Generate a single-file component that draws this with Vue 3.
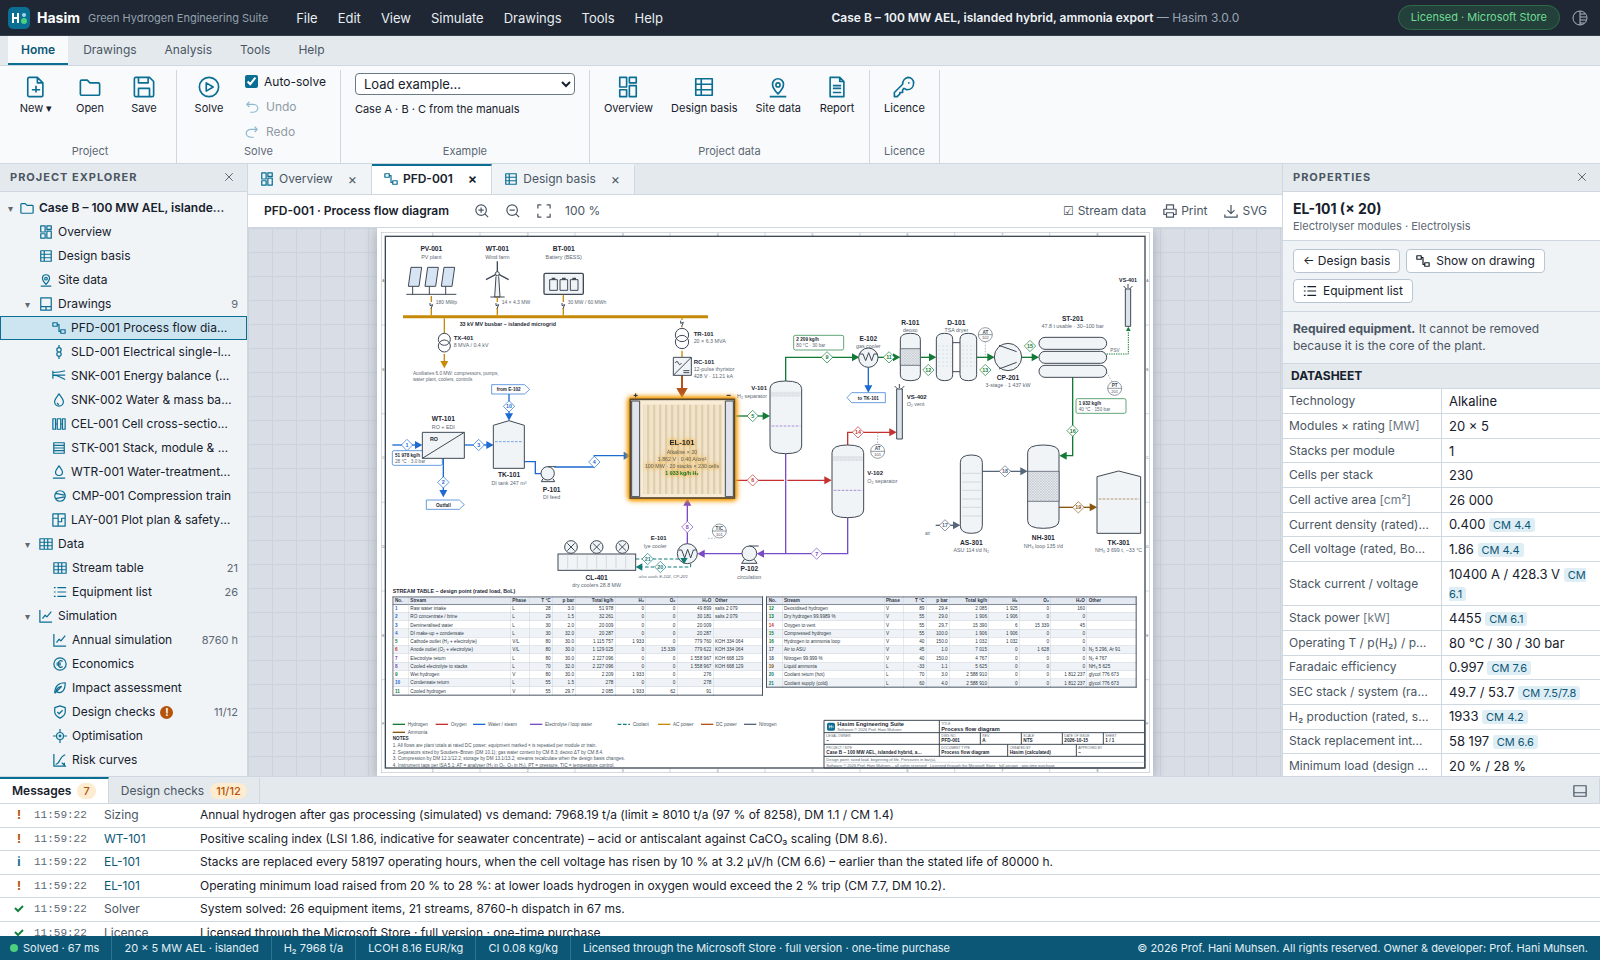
<script setup>
import { ref } from 'vue'

const icons = {
  overview: 'M2 1h5v7H2zM9 1h5v4H9zM2 10h5v5H2zM9 7h5v8H9z',
  basis: 'M2 2h12v12H2zM2 6h12M2 10h12M6 2v12',
  site: 'M8 13C5 10 4 8 4 6a4 4 0 0 1 8 0c0 2-1 4-4 7zM8 5a1 1 0 1 0 0 3 1 1 0 0 0 0-3zM2 15h12',
  drawings: 'M2 1h12v14H2zM2 11h12M8 11v4',
  pfd: 'M1 2h5v4H1zM10 10h5v4h-5zM6 4h2v8h2',
  sld: 'M8 0v3M8 13v3M8 3a2 2 0 1 0 0 5 2 2 0 0 0 0-5zM8 8a2 2 0 1 0 0 5 2 2 0 0 0 0-5z',
  energy: 'M1 2v9M1 4c6 0 8 0 14-2M1 7c7 0 8 0 14 0M1 7c7 0 9 3 14 5',
  drop: 'M8 1C6 4 3 7 3 10a5 5 0 0 0 10 0c0-3-3-6-5-9zM6 11c0 1 1 2 2 2',
  cell: 'M1 2h3v12H1zM6 2h4v12H6zM12 2h3v12h-3zM4 8h2M10 8h2',
  stack: 'M2 2h12v3H2zM2 5h12v3H2zM2 8h12v3H2zM2 11h12v3H2z',
  water: 'M8 1C6 4 4 6 4 8a4 4 0 0 0 8 0c0-2-2-4-4-7zM1 15h14',
  compressor: 'M8 2a6 6 0 1 0 0 12A6 6 0 0 0 8 2zM3 5l10 2M3 11l10-2',
  layout: 'M1 1h14v14H1zM1 6h6M7 1v14M7 10h4V6h4',
  table: 'M1 2h14v12H1zM1 6h14M1 10h14M6 2v12M10 2v12',
  list: 'M5 3h10M5 8h10M5 13h10M1 3h2M1 8h2M1 13h2',
  chart: 'M1 1v14h14M4 11l3-4 2 2 5-6',
  euro: 'M8 1a7 7 0 1 0 0 14A7 7 0 0 0 8 1zM11 5C8 3 6 5 6 8s2 5 5 3M4 7h5M4 9h5',
  leaf: 'M2 14c0-8 4-12 12-12 0 9-4 12-8 11-4-1-2-6 4-7M2 14l8-8',
  shield: 'M8 1l6 2v5c0 3-2 5-6 7-4-2-6-4-6-7V3zM5 8l2 2 4-4',
  target: 'M8 4a4 4 0 1 0 0 8 4 4 0 0 0 0-8zM8 7a1 1 0 1 0 0 2 1 1 0 0 0 0-2zM8 0v4M8 12v4M0 8h4M12 8h4',
  risk: 'M1 1v14h14M3 13c5 0 4-9 11-11M10 11l3 3M13 11v4h-3',
  folder: 'M1 4a1 1 0 0 1 1-1h4l2 2h6a1 1 0 0 1 1 1v7a1 1 0 0 1-1 1H2a1 1 0 0 1-1-1z',
  newfile: 'M3 1h6l4 4v9a1 1 0 0 1-1 1H3a1 1 0 0 1-1-1V2a1 1 0 0 1 1-1zM9 1v4h4M8 7v5M5 10h6',
  save: 'M2 1h10l3 3v10a1 1 0 0 1-1 1H2a1 1 0 0 1-1-1V2a1 1 0 0 1 1-1zM4 1v4h7V1M4 15V9h8v6',
  solve: 'M8 1a7 7 0 1 0 0 14A7 7 0 0 0 8 1zM6 5l5 3-5 3z',
  report: 'M3 1h7l3 3v11H3zM10 1v3h3M5 7h6M5 9h6M5 12h6',
  key: 'M11 1a4 4 0 0 1 4 4c0 3-2 5-5 5L8 9l-1 1v2H5v1l-2 2H1v-3l6-6a5 5 0 0 1 4-5zM11 5h1',
  undo: 'M5 2L2 5l3 3M2 5h7a5 4 0 0 1 0 9H6',
  redo: 'M11 2l3 3-3 3M14 5H7a5 4 0 0 0 0 9h3',
  zoomin: 'M7 1a6 6 0 1 0 0 12A6 6 0 0 0 7 1zM11 11l4 4M4 7h6M7 4v6',
  zoomout: 'M7 1a6 6 0 1 0 0 12A6 6 0 0 0 7 1zM11 11l4 4M4 7h6',
  fit: 'M1 5V1h4M11 1h4v4M15 11v4h-4M5 15H1v-4',
  print: 'M4 6V1h8v5M4 12H1V6h14v6h-3M4 10h8v5H4z',
  download: 'M8 1v10M4 7l4 4 4-4M1 12v3h14v-3',
  panel: 'M1 2h14v12H1zM1 10h14',
  theme: 'M8 1a7 7 0 1 0 0 14A7 7 0 0 0 8 1zM8 1v14M8 4h5M8 7h6M8 10h6M8 13h4',
  close: 'M2 2l12 12M14 2L2 14'
}

const menus = ['File', 'Edit', 'View', 'Simulate', 'Drawings', 'Tools', 'Help']
const ribbonTabs = ['Home', 'Drawings', 'Analysis', 'Tools', 'Help']
const autoSolve = ref(true)
const example = ref('')

const tree = [
  { d: 0, i: 'folder', t: 'Case B – 100 MW AEL, islanded hybrid', open: true, bold: true },
  { d: 1, i: 'overview', t: 'Overview' },
  { d: 1, i: 'basis', t: 'Design basis' },
  { d: 1, i: 'site', t: 'Site data' },
  { d: 1, i: 'drawings', t: 'Drawings', open: true, n: '9' },
  { d: 2, i: 'pfd', t: 'PFD-001 Process flow diagram', sel: true },
  { d: 2, i: 'sld', t: 'SLD-001 Electrical single-line diagram' },
  { d: 2, i: 'energy', t: 'SNK-001 Energy balance (Sankey)' },
  { d: 2, i: 'drop', t: 'SNK-002 Water & mass balance (Sankey)' },
  { d: 2, i: 'cell', t: 'CEL-001 Cell cross-section & reactions' },
  { d: 2, i: 'stack', t: 'STK-001 Stack, module & BoP' },
  { d: 2, i: 'water', t: 'WTR-001 Water-treatment train' },
  { d: 2, i: 'compressor', t: 'CMP-001 Compression train' },
  { d: 2, i: 'layout', t: 'LAY-001 Plot plan & safety distances' },
  { d: 1, i: 'table', t: 'Data', open: true },
  { d: 2, i: 'table', t: 'Stream table', n: '21' },
  { d: 2, i: 'list', t: 'Equipment list', n: '26' },
  { d: 1, i: 'chart', t: 'Simulation', open: true },
  { d: 2, i: 'chart', t: 'Annual simulation', n: '8760 h' },
  { d: 2, i: 'euro', t: 'Economics' },
  { d: 2, i: 'leaf', t: 'Impact assessment' },
  { d: 2, i: 'shield', t: 'Design checks', warn: true, n: '11/12' },
  { d: 2, i: 'target', t: 'Optimisation' },
  { d: 2, i: 'risk', t: 'Risk curves' }
]

const docTabs = [
  { i: 'overview', t: 'Overview' },
  { i: 'pfd', t: 'PFD-001', on: true },
  { i: 'basis', t: 'Design basis' }
]

const sheet = [
  ['Technology', '', 'Alkaline'],
  ['Modules × rating', '[MW]', '20 × 5'],
  ['Stacks per module', '', '1'],
  ['Cells per stack', '', '230'],
  ['Cell active area', '[cm²]', '26 000'],
  ['Current density (rated)', '[A/cm²]', '0.400', 'CM 4.4'],
  ['Cell voltage (rated, BoL)', '[V]', '1.86', 'CM 4.4'],
  ['Stack current / voltage', '', '10400 A / 428.3 V', 'CM 6.1'],
  ['Stack power', '[kW]', '4455', 'CM 6.1'],
  ['Operating T / p(H₂) / p(O₂)', '', '80 °C / 30 / 30 bar'],
  ['Faradaic efficiency', '', '0.997', 'CM 7.6'],
  ['SEC stack / system (rated)', '', '49.7 / 53.7', 'CM 7.5/7.8'],
  ['H₂ production (rated, sum)', '', '1933', 'CM 4.2'],
  ['Stack replacement interval', '', '58 197', 'CM 6.6'],
  ['Minimum load (design / eff.)', '', '20 % / 28 %']
]

const messages = [
  ['warn', 'Sizing', 'Annual hydrogen after gas processing (simulated) vs demand: 7968.19 t/a (limit ≥ 8010 t/a (97 % of 8258), DM 1.1 / CM 1.4)'],
  ['warn', 'WT-101', 'Positive scaling index (LSI 1.86, indicative for seawater concentrate) – acid or antiscalant against CaCO₃ scaling (DM 8.6).', true],
  ['info', 'EL-101', 'Stacks are replaced every 58197 operating hours, when the cell voltage has risen by 10 % at 3.2 µV/h (CM 6.6) – earlier than the stated life of 80000 h.', true],
  ['warn', 'EL-101', 'Operating minimum load raised from 20 % to 28 %: at lower loads hydrogen in oxygen would exceed the 2 % trip (CM 7.7, DM 10.2).', true],
  ['ok', 'Solver', 'System solved: 26 equipment items, 21 streams, 8760-h dispatch in 67 ms.'],
  ['ok', 'Licence', 'Licensed through the Microsoft Store · full version · one-time purchase']
]

const status = ['20 × 5 MW AEL · islanded', 'H₂ 7968 t/a', 'LCOH 8.16 EUR/kg', 'CI 0.08 kg/kg']

/* ---- process flow diagram ---- */
const zonesX = [167, 452, 737, 1022, 1306, 1591, 1876, 2161]
const zonesY = [['A', 158], ['B', 424], ['C', 689], ['D', 956], ['E', 1222], ['F', 1486]]

// d: route, c: medium, a: arrow tip [x, y, angle]
const pipes = [
  { c: 'ac', d: 'M163 204V262M361 207V262M559 200V262M202 271V316M915 271V298M915 368V388M202 378V402', a: [202, 421, 90] },
  { c: 'dc', d: 'M915 442V482', a: [915, 510, 90, 1] },
  { c: 'water', d: 'M46 651H116', a: [136, 651, 0] },
  { c: 'water', d: 'M262 651H330', a: [350, 651, 0] },
  { c: 'water', d: 'M396 498V558', a: [396, 578, 90] },
  { c: 'water', d: 'M199 691V790', a: [199, 808, 90] },
  { c: 'water', d: 'M442 701H475V737H493M532 717H652V683H742', a: [762, 683, 0] },
  { c: 'water', d: 'M1474 418V474', a: [1474, 494, 90] },
  { c: 'h2', d: 'M1072 564H1160', a: [1179, 564, 0] },
  { c: 'h2', d: 'M1226 459V388H1440', a: [1447, 388, 0] },
  { c: 'h2', d: 'M1503 388H1550', a: [1570, 388, 0] },
  { c: 'h2', d: 'M1630 388H1660', a: [1678, 388, 0] },
  { c: 'h2', d: 'M1799 388H1835', a: [1853, 388, 0] },
  { c: 'h2', d: 'M1934 388H1968', a: [1986, 388, 0] },
  { c: 'h2', d: 'M2087 447V683H2064', a: [2047, 683, 180] },
  { c: 'o2', d: 'M1072 757H1221M1231 757H1346', a: [1364, 757, 0] },
  { c: 'o2', d: 'M1412 651V613H1540', a: [1559, 613, 0] },
  { c: 'lye', d: 'M1226 677V977M1412 869V977H1160', a: [1139, 977, 180] },
  { c: 'lye', d: 'M1095 977H980', a: [961, 977, 180] },
  { c: 'lye', d: 'M931 947V832', a: [931, 811, 270] },
  { c: 'n2', d: 'M1676 892H1732', a: [1750, 892, 0] },
  { c: 'n2', d: 'M1816 730H1934', a: [1952, 730, 0] },
  { c: 'nh3', d: 'M2046 838H2142', a: [2160, 838, 0] }
]
const nodes = [
  [90, 651, 1, 'water'], [199, 763, 2, 'water'], [305, 651, 3, 'water'], [652, 702, 4, 'water'], [396, 535, 10, 'water'],
  [1127, 564, 5, 'h2'], [1350, 388, 9, 'h2'], [1536, 388, 11, 'h2'], [1654, 426, 12, 'h2'], [1825, 426, 13, 'h2'], [1959, 354, 15, 'h2'], [2087, 608, 16, 'h2'],
  [1127, 757, 6, 'o2'], [1443, 613, 14, 'o2'], [1319, 977, 7, 'lye'], [931, 897, 8, 'lye'],
  [1704, 892, 17, 'n2'], [1884, 730, 18, 'n2'], [2104, 838, 19, 'nh3'], [812, 993, 21, 'cool'], [850, 1017, 20, 'cool']
]
// x, baseline, class, text
const labels = [
  [163, 69, 'tag m', 'PV-001'], [163, 93, 'sub m', 'PV plant'], [361, 69, 'tag m', 'WT-001'], [361, 93, 'sub m', 'Wind farm'],
  [560, 69, 'tag m', 'BT-001'], [560, 93, 'sub m', 'Battery (BESS)'],
  [176, 228, 'sm', '180 MWp'], [374, 228, 'sm', '14 × 4.3 MW'], [572, 228, 'sm', '30 MW / 60 MWh'],
  [248, 294, 'bs', '33 kV MV busbar – islanded microgrid'],
  [230, 336, 'tag2', 'TX-401'], [230, 356, 'sub', '8 MVA / 0.4 kV'],
  [108, 440, 'xs', 'Auxiliaries 6.0 MW: compressors, pumps,'], [108, 459, 'xs', 'water plant, coolers, controls'],
  [950, 324, 'tag2', 'TR-101'], [950, 345, 'sub', '20 × 6.3 MVA'], [950, 408, 'tag2', 'RC-101'], [950, 429, 'sub', '12-pulse thyristor'], [950, 450, 'sub', '428 V · 11.21 kA'],
  [199, 579, 'tag m', 'WT-101'], [199, 603, 'sub m', 'RO + EDI'], [171, 640, 'bs m', 'RO'],
  [396, 747, 'tag m', 'TK-101'], [396, 771, 'sub m', 'DI tank 247 m³'], [524, 792, 'tag m', 'P-101'], [524, 813, 'sub m', 'DI feed'],
  [395, 489, 'bx m', 'from E-102'], [199, 836, 'bx m', 'Outfall'], [1474, 516, 'bx m', 'to TK-101'],
  [1170, 486, 'tag2 e', 'V-101'], [1170, 509, 'sub e', 'H₂ separator'],
  [1474, 339, 'tag m', 'E-102'], [1474, 361, 'sub m', 'gas cooler'], [1600, 290, 'tag m', 'R-101'], [1600, 312, 'sub m', 'deoxo'],
  [1738, 290, 'tag m', 'D-101'], [1738, 312, 'sub m', 'TSA dryer'], [1893, 456, 'tag m', 'CP-201'], [1893, 477, 'sub m', '3-stage · 1 437 kW'],
  [2087, 278, 'tag m', 'ST-201'], [2087, 300, 'sub m', '47.8 t usable · 30–100 bar'], [2253, 162, 'bs m', 'VS-401'], [2200, 372, 'xs', 'PSV'],
  [1589, 513, 'tag2', 'VS-402'], [1589, 534, 'sub', 'O₂ vent'], [1471, 741, 'tag2', 'V-102'], [1471, 765, 'sub', 'O₂ separator'],
  [1783, 951, 'tag m', 'AS-301'], [1783, 972, 'sub m', 'ASU 114 t/d N₂'], [1999, 935, 'tag m', 'NH-301'], [1999, 960, 'sub m', 'NH₃ loop 135 t/d'],
  [2225, 951, 'tag m', 'TK-301'], [2225, 972, 'sub m', 'NH₃ 3 699 t, −33 °C'], [1644, 921, 'xs', 'air'],
  [869, 936, 'tag2 e', 'E-101'], [869, 960, 'sub e', 'lye cooler'], [1117, 1028, 'tag m', 'P-102'], [1117, 1053, 'sub m', 'circulation'],
  [659, 1055, 'tag m', 'CL-401'], [659, 1077, 'sub m', 'dry coolers 28.8 MW'], [859, 1050, 'it m', 'also cools E-102, CP-201'],
  [47, 1095, 'bs', 'STREAM TABLE – design point (rated load, BoL)']
]
const boxes = [
  [46, 668, 'water', '51 978 kg/h', '28 °C · 3.0 bar'],
  [1250, 322, 'h2', '2 209 kg/h', '80 °C · 30 bar'],
  [2097, 512, 'h2', '1 932 kg/h', '40 °C · 150 bar']
]
const bubbles = [[1825, 320, 'AT', '102'], [1502, 670, 'AT', '101'], [2213, 481, 'PT', '201'], [1027, 909, 'TIC', '101']]
const legend = [
  [47, 1489, 'h2', 'Hydrogen'], [176, 1489, 'o2', 'Oxygen'], [288, 1489, 'water', 'Water / steam'], [459, 1489, 'lye', 'Electrolyte / loop water'],
  [722, 1489, 'cool', 'Coolant'], [843, 1489, 'ac', 'AC power'], [972, 1489, 'dc', 'DC power'], [1101, 1489, 'n2', 'Nitrogen'], [47, 1513, 'nh3', 'Ammonia']
]
const notes = [
  '1. All flows are plant totals at rated DC power; equipment marked × is repeated per module or train.',
  '2. Separators sized by Souders–Brown (DM 10.1); gas water content by CM 8.3; deoxo ΔT by CM 8.4.',
  '3. Compression by DM 12.1/12.2; storage by DM 13.1/13.2; streams recalculate when the design basis changes.',
  '4. Instrument tags per ISA 5.1: AT = analyser (H₂ in O₂, O₂ in H₂), PT = pressure, TIC = temperature control.'
]
const cols = ['No.', 'Stream', 'Phase', 'T °C', 'p bar', 'Total kg/h', 'H₂', 'O₂', 'H₂O', 'Other']
const streamTables = [
  { x: 46, h: 298, rows: [
    ['water', '1', 'Raw water intake', 'L', '28', '3.0', '51 978', '0', '0', '49 899', 'salts 2 079'],
    ['water', '2', 'RO concentrate / brine', 'L', '29', '1.5', '32 261', '0', '0', '30 181', 'salts 2 079'],
    ['water', '3', 'Demineralised water', 'L', '30', '2.0', '20 009', '0', '0', '20 009', ''],
    ['water', '4', 'DI make-up + condensate', 'L', '30', '32.0', '20 287', '0', '0', '20 287', ''],
    ['h2', '5', 'Cathode outlet (H₂ + electrolyte)', 'V/L', '80', '30.0', '1 115 757', '1 933', '0', '779 760', 'KOH 334 064'],
    ['o2', '6', 'Anode outlet (O₂ + electrolyte)', 'V/L', '80', '30.0', '1 129 025', '0', '15 339', '779 622', 'KOH 334 064'],
    ['lye', '7', 'Electrolyte return', 'L', '80', '30.0', '2 227 096', '0', '0', '1 558 967', 'KOH 668 129'],
    ['lye', '8', 'Cooled electrolyte to stacks', 'L', '70', '32.0', '2 227 096', '0', '0', '1 558 967', 'KOH 668 129'],
    ['h2', '9', 'Wet hydrogen', 'V', '80', '30.0', '2 209', '1 933', '0', '276', ''],
    ['water', '10', 'Condensate return', 'L', '55', '1.5', '278', '0', '0', '278', ''],
    ['h2', '11', 'Cooled hydrogen', 'V', '55', '29.7', '2 085', '1 933', '62', '91', '']
  ] },
  { x: 1167, h: 274, rows: [
    ['h2', '12', 'Deoxidised hydrogen', 'V', '89', '29.4', '2 085', '1 925', '0', '160', ''],
    ['h2', '13', 'Dry hydrogen 99.9989 %', 'V', '55', '29.0', '1 906', '1 906', '0', '0', ''],
    ['o2', '14', 'Oxygen to vent', 'V', '55', '29.7', '15 390', '6', '15 339', '45', ''],
    ['h2', '15', 'Compressed hydrogen', 'V', '55', '100.0', '1 906', '1 906', '0', '0', ''],
    ['h2', '16', 'Hydrogen to ammonia loop', 'V', '40', '150.0', '1 032', '1 032', '0', '0', ''],
    ['n2', '17', 'Air to ASU', 'V', '45', '1.0', '7 015', '0', '1 628', '0', 'N₂ 5 296, Ar 91'],
    ['n2', '18', 'Nitrogen 99.999 %', 'V', '40', '150.0', '4 767', '0', '0', '0', 'N₂ 4 767'],
    ['nh3', '19', 'Liquid ammonia', 'L', '-33', '1.1', '5 625', '0', '0', '0', 'NH₃ 5 625'],
    ['cool', '20', 'Coolant return (hot)', 'L', '70', '3.0', '2 588 910', '0', '0', '1 812 237', 'glycol 776 673'],
    ['cool', '21', 'Coolant supply (cold)', 'L', '60', '4.0', '2 588 910', '0', '0', '1 812 237', 'glycol 776 673']
  ] }
]
const block = [
  [1693, 1491, 'tiny', 'TITLE'], [1693, 1510, 'bt', 'Process flow diagram'],
  [1348, 1527, 'tiny', 'LEGAL OWNER'], [1348, 1542, 'bv', '–'],
  [1693, 1527, 'tiny', 'DWG NO.'], [1693, 1543, 'bv', 'PFD-001'], [1816, 1527, 'tiny', 'REV.'], [1816, 1543, 'bv', 'A'],
  [1939, 1527, 'tiny', 'SCALE'], [1939, 1543, 'bv', 'NTS'], [2062, 1527, 'tiny', 'DATE OF ISSUE'], [2062, 1543, 'bv', '2026-10-15'],
  [2185, 1527, 'tiny', 'SHEET'], [2185, 1543, 'bv', '1 / 1'],
  [1348, 1563, 'tiny', 'PROJECT / SITE'], [1348, 1579, 'bv', 'Case B – 100 MW AEL, islanded hybrid, a…'],
  [1693, 1563, 'tiny', 'DOCUMENT TYPE'], [1693, 1579, 'bv', 'Process flow diagram'],
  [1898, 1563, 'tiny', 'CREATED BY'], [1898, 1579, 'bv', 'Hasim (calculated)'], [2104, 1563, 'tiny', 'APPROVED BY'], [2104, 1579, 'bv', '–'],
  [1348, 1599, 'fine', 'Design point: rated load, beginning of life. Pressures in bar(a).'],
  [1348, 1616, 'fine', 'Software © 2026 Prof. Hani Muhsen – all rights reserved · Licensed through the Microsoft Store · full version · one-time purchase']
]
</script>

<template>
  <div class="app">
    <header class="topbar">
      <svg class="logo" viewBox="0 0 22 22" aria-hidden="true">
        <rect width="22" height="22" rx="5" fill="#0b6e93" />
        <path d="M5 6v10M10 6v10M5 11h5" stroke="#fff" stroke-width="2" fill="none" />
        <circle cx="16" cy="8" r="2" fill="#9fd8ea" /><circle cx="16" cy="14" r="3" fill="#4cd07d" />
      </svg>
      <strong class="brand">Hasim</strong>
      <span class="suite">Green Hydrogen Engineering Suite</span>
      <nav class="menus"><button v-for="m in menus" :key="m" type="button">{{ m }}</button></nav>
      <div class="title"><b>Case B – 100 MW AEL, islanded hybrid, ammonia export</b> — Hasim 3.0.0</div>
      <span class="licence">Licensed · Microsoft Store</span>
      <button class="theme" type="button" aria-label="Theme"><svg class="ic" viewBox="0 0 16 16"><path :d="icons.theme" /></svg></button>
    </header>

    <nav class="rtabs"><button v-for="(t, k) in ribbonTabs" :key="t" type="button" :class="{ on: k === 0 }">{{ t }}</button></nav>

    <section class="ribbon">
      <div class="group">
        <div class="tools">
          <button class="big" type="button"><svg class="ic" viewBox="0 0 16 16"><path :d="icons.newfile" /></svg>New ▾</button>
          <button class="big" type="button"><svg class="ic" viewBox="0 0 16 16"><path :d="icons.folder" /></svg>Open</button>
          <button class="big" type="button"><svg class="ic" viewBox="0 0 16 16"><path :d="icons.save" /></svg>Save</button>
        </div>
        <div class="cap">Project</div>
      </div>
      <div class="group">
        <div class="tools">
          <button class="big" type="button"><svg class="ic" viewBox="0 0 16 16"><path :d="icons.solve" /></svg>Solve</button>
          <div class="stack">
            <label><input v-model="autoSolve" type="checkbox">Auto-solve</label>
            <button type="button" disabled><svg class="ic" viewBox="0 0 16 16"><path :d="icons.undo" /></svg>Undo</button>
            <button type="button" disabled><svg class="ic" viewBox="0 0 16 16"><path :d="icons.redo" /></svg>Redo</button>
          </div>
        </div>
        <div class="cap">Solve</div>
      </div>
      <div class="group wide">
        <div class="example">
          <select v-model="example" aria-label="Load example"><option value="">Load example…</option></select>
          <span>Case A · B · C from the manuals</span>
        </div>
        <div class="cap">Example</div>
      </div>
      <div class="group">
        <div class="tools">
          <button class="big" type="button"><svg class="ic" viewBox="0 0 16 16"><path :d="icons.overview" /></svg>Overview</button>
          <button class="big" type="button"><svg class="ic" viewBox="0 0 16 16"><path :d="icons.basis" /></svg>Design basis</button>
          <button class="big" type="button"><svg class="ic" viewBox="0 0 16 16"><path :d="icons.site" /></svg>Site data</button>
          <button class="big" type="button"><svg class="ic" viewBox="0 0 16 16"><path :d="icons.report" /></svg>Report</button>
        </div>
        <div class="cap">Project data</div>
      </div>
      <div class="group">
        <div class="tools"><button class="big" type="button"><svg class="ic" viewBox="0 0 16 16"><path :d="icons.key" /></svg>Licence</button></div>
        <div class="cap">Licence</div>
      </div>
    </section>

    <main class="work">
      <aside class="explorer">
        <div class="phead">PROJECT EXPLORER<button type="button" aria-label="Close explorer"><svg class="ic" viewBox="0 0 16 16"><path :d="icons.close" /></svg></button></div>
        <ul class="tree">
          <li v-for="r in tree" :key="r.t" :class="['d' + r.d, { sel: r.sel, bold: r.bold, counted: r.n }]">
            <span class="caret">{{ r.open ? '▾' : '' }}</span>
            <svg class="ic" viewBox="0 0 16 16"><path :d="icons[r.i]" /></svg>
            <span class="name">{{ r.t }}</span>
            <span v-if="r.warn" class="bang">!</span>
            <span v-if="r.n" class="count">{{ r.n }}</span>
          </li>
        </ul>
      </aside>

      <section class="center">
        <div class="dtabs">
          <div v-for="t in docTabs" :key="t.t" class="dtab" :class="{ on: t.on }">
            <button type="button" class="dname"><svg class="ic" viewBox="0 0 16 16"><path :d="icons[t.i]" /></svg>{{ t.t }}</button>
            <button type="button" class="x" :aria-label="'Close ' + t.t">×</button>
          </div>
        </div>
        <div class="dbar">
          <b>PFD-001 · Process flow diagram</b>
          <button type="button" aria-label="Zoom in"><svg class="ic" viewBox="0 0 16 16"><path :d="icons.zoomin" /></svg></button>
          <button type="button" aria-label="Zoom out"><svg class="ic" viewBox="0 0 16 16"><path :d="icons.zoomout" /></svg></button>
          <button type="button" aria-label="Fit"><svg class="ic" viewBox="0 0 16 16"><path :d="icons.fit" /></svg></button>
          <span class="pct">100 %</span>
          <button class="first" type="button">☑ Stream data</button>
          <button type="button"><svg class="ic" viewBox="0 0 16 16"><path :d="icons.print" /></svg>Print</button>
          <button type="button"><svg class="ic" viewBox="0 0 16 16"><path :d="icons.download" /></svg>SVG</button>
        </div>
        <div class="canvas">
          <svg class="paper" viewBox="0 0 2328 1644">
            <defs>
              <pattern id="mesh" width="8" height="8" patternUnits="userSpaceOnUse"><rect width="8" height="8" fill="#eceff2" /><path d="M0 0l8 8M8 0L0 8" stroke="#8e98a3" stroke-width="1" /></pattern>
              <pattern id="beads" width="12" height="12" patternUnits="userSpaceOnUse"><circle cx="6" cy="6" r="2" fill="#c9d1d9" /></pattern>
              <pattern id="plates" width="18" height="18" patternUnits="userSpaceOnUse"><rect width="18" height="18" fill="#f1e4ca" /><rect width="7" height="18" fill="#dfcfae" /></pattern>
            </defs>
            <rect x="13" y="13" width="2304" height="1621" class="outer" />
            <path class="outer" d="M309 13v12M594 13v12M879 13v12M1164 13v12M1449 13v12M1733 13v12M2018 13v12M309 1620v14M594 1620v14M879 1620v14M1164 1620v14M1449 1620v14M1733 1620v14M2018 1620v14M13 291h12M13 557h12M13 823h12M13 1089h12M13 1355h12M2304 291h13M2304 557h13M2304 823h13M2304 1089h13M2304 1355h13" />
            <rect x="25" y="25" width="2279" height="1595" class="frame" />
            <template v-for="(x, k) in zonesX" :key="x"><text :x="x" y="24" class="zone">{{ k + 1 }}</text><text :x="x" y="1632" class="zone">{{ k + 1 }}</text></template>
            <template v-for="z in zonesY" :key="z[0]"><text x="19" :y="z[1] + 4" class="zone">{{ z[0] }}</text><text x="2311" :y="z[1] + 4" class="zone">{{ z[0] }}</text></template>

            <g v-for="b in boxes" :key="b[3]">
              <rect :x="b[0]" :y="b[1]" width="150" height="44" rx="5" :class="['flow', b[2]]" />
              <text :x="b[0] + 8" :y="b[1] + 18" class="bx">{{ b[3] }}</text><text :x="b[0] + 8" :y="b[1] + 36" class="xs">{{ b[4] }}</text>
            </g>

            <!-- power supply -->
            <path d="M78 266H993" class="bus" />
            <g class="eq">
              <path class="pv" d="M102 118h32l-8 57H94zM152 118h32l-8 57h-32zM201 118h32l-8 57h-32z" />
              <path d="M107 175v24M157 175v24M206 175v24M88 199h150" />
              <path d="M361 137V100M361 137l-34 18M361 137l34 18" class="thick" /><circle cx="361" cy="137" r="6" /><path d="M357 145l-4 62h16l-4-62M340 207h43" />
              <rect x="501" y="136" width="118" height="63" rx="4" class="thick" />
              <path d="M518 155h23v32h-23zM549 155h23v32h-23zM580 155h23v32h-23z" />
              <path class="solid" d="M524 149h11v6h-11zM555 149h11v6h-11zM586 149h11v6h-11z" />
            </g>
            <g v-for="p in pipes" :key="p.d" :class="['pipe', p.c]">
              <path :d="p.d" />
              <path class="head" :d="p.a[3] ? 'M0 0L-30-17V17Z' : 'M0 0L-22-12V12Z'" :transform="`translate(${p.a[0]} ${p.a[1]}) rotate(${p.a[2]})`" />
            </g>
            <g class="cool coolant">
              <path d="M776 993H921V1002M941 1007V1017H796" /><path class="head" d="M776 1017l20-11v22z" />
            </g>
            <path class="dotline" d="M2189 378H2254V312" /><path fill="#137a36" d="M2254 296l-7 13h14z" />
            <path class="sense" d="M1825 341V388M1502 613V650M2189 433L2206 463M993 931h22" />

            <g class="eq">
              <path class="gap" d="M163 222v18M361 222v18M559 222v18M915 276v18" />
              <path d="M159 225v8l8-3-5 12M357 225v8l8-3-5 12M555 225v8l8-3-5 12M911 278v8l8-3-5 12" />
              <g class="hollow"><circle cx="202" cy="334" r="18" /><circle cx="202" cy="354" r="18" /><circle cx="915" cy="321" r="20" /><circle cx="915" cy="342" r="20" /></g>
              <path d="M889 388h54v54h-54zM889 442l54-54M895 405q5-10 9 0t9 0M919 428h18M919 434h18" />
              <path d="M136 613h126v78H136zM136 691l126-78" />
              <path d="M349 592l47-14 46 14v129h-93z" />
              <path d="M498 752l-5 9h40l-5-9" /><circle cx="512" cy="736" r="20" /><path d="M512 716h24" />
              <path d="M1179 482q0-23 47-23t48 23v172q0 23-48 23t-47-23z" />
              <path d="M1365 674q0-23 47-23t48 23v172q0 23-48 23t-47-23z" />
              <circle cx="1474" cy="389" r="29" /><path class="hollow" d="M1448 378l10 0 8 20 9-24 9 24 7-20 10 0" />
              <path d="M1570 334q0-18 30-18t30 18v106q0 18-30 18t-30-18z" /><path fill="url(#mesh)" class="mesh" d="M1570 362h60v50h-60z" />
              <path d="M1727 344h22M1727 431h22M1678 334q0-18 25-18t24 18v106q0 18-24 18t-25-18zM1749 334q0-18 25-18t25 18v106q0 18-25 18t-25-18z" />
              <circle cx="1893" cy="387" r="41" /><path d="M1866 352l53 19M1866 423l53-20" />
              <rect x="1986" y="328" width="203" height="36" rx="18" /><rect x="1986" y="370" width="203" height="36" rx="18" /><rect x="1986" y="412" width="203" height="36" rx="18" />
              <path class="pipeStack" d="M2245 183h16v112h-16zM1559 483h17v150h-17z" /><path class="hollow" d="M2240 174l8 9M2266 174l-8 9M2253 168v12M1553 474l9 9M1582 474l-9 9M1567 468v12" />
              <path d="M1750 704q0-23 33-23t33 23v189q0 23-33 23t-33-23z" />
              <path d="M1952 674q0-23 47-23t47 23v204q0 23-47 23t-47-23z" /><path fill="url(#mesh)" class="mesh" d="M1952 730h94v90h-94z" />
              <path d="M2160 746l65-17 66 17v170h-131z" />
              <path d="M1102 994l-8 12h46l-8-12" /><circle cx="1117" cy="976" r="22" /><path d="M1117 954h28" />
              <circle cx="931" cy="977" r="30" /><path class="hollow" d="M905 966l9 0 9 24 9-26 9 26 8-24 10 0" />
              <rect x="543" y="978" width="233" height="49" />
              <circle cx="582" cy="957" r="19" /><circle cx="659" cy="957" r="19" /><circle cx="736" cy="957" r="19" />
              <path d="M571 946l22 22M593 946l-22 22M648 946l22 22M670 946l-22 22M725 946l22 22M747 946l-22 22" />
            </g>
            <path class="faint" d="M572 983v39M601 983v39M630 983v39M659 983v39M688 983v39M717 983v39M746 983v39M1755 736h57M1755 762h57M1755 787h57M1755 813h57M1755 838h57M1755 864h57" />
            <path fill="url(#beads)" d="M1683 352h40v66h-40zM1754 352h40v66h-40z" />
            <path fill="url(#mesh)" opacity=".6" d="M1182 491h89v15h-89zM1368 684h89v15h-89z" />
            <path class="level water" d="M354 641h84" /><path class="level lye" d="M1184 594h86M1370 787h86" /><path class="level nh3" d="M2165 813h122" />
            <path class="coolhead" d="M921 1008l-11-18h22z" />

            <!-- electrolyser -->
            <rect x="760" y="514" width="312" height="296" class="shell" />
            <rect x="798" y="530" width="238" height="268" fill="url(#plates)" />
            <path class="endplate" d="M764 519h24v287h-24zM1045 519h24v287h-24z" />
            <path d="M776 496v12M770 502h12M1049 502h12" stroke="#1d2733" stroke-width="3" />
            <g class="cellText">
              <text x="915" y="651" class="el">EL-101</text><text x="915" y="677" class="sub m">Alkaline × 20</text><text x="915" y="698" class="sub m">1.862 V · 0.40 A/cm²</text>
              <text x="915" y="719" class="sub m">100 MW · 20 stacks × 230 cells</text><text x="915" y="741" class="prod">1 933 kg/h H₂</text>
            </g>

            <path class="flow water" d="M344 470h99l15 14-15 14h-99zM148 816h99l15 14-15 14h-99zM1410 509l14-15h101v30h-101z" />
            <g v-for="n in nodes" :key="n[2]" :class="['node', n[3]]"><path :d="`M${n[0]} ${n[1] - 17}l17 17-17 17-17-17z`" /><text :x="n[0]" :y="n[1] + 6">{{ n[2] }}</text></g>
            <g v-for="b in bubbles" :key="b[0] + b[3] + b[1]" class="bubble"><circle :cx="b[0]" :cy="b[1]" r="21" /><path :d="`M${b[0] - 21} ${b[1]}h42`" /><text :x="b[0]" :y="b[1] - 3">{{ b[2] }}</text><text :x="b[0]" :y="b[1] + 14" class="n">{{ b[3] }}</text></g>
            <text v-for="l in labels" :key="l[3] + l[0]" :x="l[0]" :y="l[1]" :class="l[2]">{{ l[3] }}</text>

            <foreignObject v-for="t in streamTables" :key="t.x" :x="t.x" y="1105" width="1114" height="300">
              <table class="streams" :style="{ height: t.h + 'px' }">
                <thead><tr><th v-for="c in cols" :key="c">{{ c }}</th></tr></thead>
                <tbody><tr v-for="r in t.rows" :key="r[1]"><td v-for="(v, k) in r.slice(1)" :key="k" :class="k ? '' : r[0]">{{ v }}</td></tr></tbody>
              </table>
            </foreignObject>

            <g v-for="l in legend" :key="l[3]" :class="['key', l[2]]"><path :d="`M${l[0]} ${l[1]}h37`" /><text :x="l[0] + 45" :y="l[1] + 5" class="lg">{{ l[3] }}</text></g>
            <text x="47" y="1536" class="bx">NOTES</text>
            <text v-for="(n, k) in notes" :key="k" x="47" :y="1557 + k * 20" class="note">{{ n }}</text>

            <path class="block" d="M1341 1477h962v143h-962zM1341 1514h962M1341 1549h962M1341 1585h962M1687 1477v108M1810 1514v35M1933 1514v35M2056 1514v35M2179 1514v35M1892 1549v36M2098 1549v36" />
            <path class="faint" d="M1342 1603h960" />
            <rect x="1350" y="1484" width="24" height="24" rx="5" fill="#0b6e93" /><path d="M1357 1491v10M1363 1491v10M1357 1496h6M1368 1493v7" stroke="#fff" stroke-width="2" />
            <text x="1381" y="1494" class="bt">Hasim Engineering Suite</text><text x="1381" y="1509" class="fine">Software © 2026 Prof. Hani Muhsen</text>
            <text v-for="(b, k) in block" :key="k" :x="b[0]" :y="b[1]" :class="b[2]">{{ b[3] }}</text>
          </svg>
        </div>
      </section>

      <aside class="props">
        <div class="phead">PROPERTIES<button type="button" aria-label="Close properties"><svg class="ic" viewBox="0 0 16 16"><path :d="icons.close" /></svg></button></div>
        <div class="ptitle"><h2>EL-101 (× 20)</h2><p>Electrolyser modules · Electrolysis</p></div>
        <div class="pbtns">
          <button type="button">← Design basis</button>
          <button type="button"><svg class="ic" viewBox="0 0 16 16"><path :d="icons.pfd" /></svg>Show on drawing</button>
          <button type="button"><svg class="ic" viewBox="0 0 16 16"><path :d="icons.list" /></svg>Equipment list</button>
        </div>
        <p class="req"><b>Required equipment.</b> It cannot be removed because it is the core of the plant.</p>
        <h3>DATASHEET</h3>
        <div class="dsbox">
          <table class="ds">
            <tbody>
              <tr v-for="r in sheet" :key="r[0]"><th scope="row">{{ r[0] }}<small v-if="r[1]">{{ ' ' + r[1] }}</small></th><td>{{ r[2] }} <span v-if="r[3]" class="ref">{{ r[3] }}</span></td></tr>
            </tbody>
          </table>
        </div>
      </aside>
    </main>

    <section class="bottom">
      <div class="btabs">
        <button type="button" class="on">Messages<span class="pill">7</span></button>
        <button type="button">Design checks<span class="pill">11/12</span></button>
        <button type="button" class="dock" aria-label="Toggle panel"><svg class="ic" viewBox="0 0 16 16"><path :d="icons.panel" /></svg></button>
      </div>
      <div class="mbox">
        <ul class="msgs">
          <li v-for="(m, k) in messages" :key="k">
            <span class="mi" :class="m[0]">{{ m[0] === 'warn' ? '!' : m[0] === 'info' ? 'i' : '' }}<svg v-if="m[0] === 'ok'" viewBox="0 0 10 10"><path d="M1 5l3 3 5-5" /></svg></span>
            <time>11:59:22</time>
            <a v-if="m[3]" class="src" href="#">{{ m[1] }}</a><span v-else class="src">{{ m[1] }}</span>
            <span class="mt">{{ m[2] }}</span>
          </li>
        </ul>
      </div>
    </section>

    <footer class="status">
      <span><i class="dot"></i>Solved · 67 ms</span>
      <span v-for="s in status" :key="s">{{ s }}</span>
      <span class="lic">Licensed through the Microsoft Store · full version · one-time purchase</span>
      <span class="copy">© 2026 Prof. Hani Muhsen. All rights reserved. Owner &amp; developer: Prof. Hani Muhsen.</span>
    </footer>
  </div>
</template>

<style>
body { margin: 0; overflow: hidden; }
</style>

<style scoped>
* { box-sizing: border-box; }
.app { height: 100vh; display: flex; flex-direction: column; font: 12px/16px Inter, "Liberation Sans", sans-serif; color: #17212c; background: #f0f3f6; }
button { font: inherit; color: inherit; background: none; border: 0; padding: 0; margin: 0; white-space: nowrap; }
ul { list-style: none; margin: 0; padding: 0; }
h2, h3, p { margin: 0; }
.ic { width: 14px; height: 14px; flex: none; fill: none; stroke: #0b6e93; stroke-width: 1.4; stroke-linejoin: round; }

.topbar { height: 36px; flex: none; display: flex; align-items: center; padding: 0 12px 0 8px; background: #1e2733; border-bottom: 1px solid #35404c; color: #e8edf2; }
.logo { width: 22px; height: 22px; margin-right: 7px; }
.brand { font-size: 14px; margin-right: 8px; color: #fff; }
.suite { color: #94a1ae; font-size: 11px; }
.menus { display: flex; margin-left: 18px; }
.menus button { padding: 0 10px; font-size: 13px; }
.title { flex: 1; text-align: center; color: #9aa6b2; white-space: nowrap; overflow: hidden; }
.title b { color: #eef2f6; font-weight: 600; }
.licence { padding: 0 12px; font-size: 11px; line-height: 23px; border: 1px solid #2f6b4a; border-radius: 13px; background: #23403a; color: #6fdc96; }
.theme { margin-left: 12px; display: flex; }
.theme .ic { width: 16px; height: 16px; stroke: #aab5c0; stroke-width: 1; }

.rtabs { height: 30px; flex: none; display: flex; gap: 2px; padding-left: 8px; background: #e4e9ed; border-bottom: 1px solid #cfd8e1; }
.rtabs button { padding: 1px 13px 0; color: #4a5663; border-bottom: 2px solid transparent; }
.rtabs .on { background: #f9fafc; color: #0b5775; font-weight: 600; border-color: #0b6e93; }

.ribbon { height: 98px; flex: none; display: flex; padding: 4px 4px 0; background: #f9fafc; border-bottom: 1px solid #cfd8e1; }
.group { display: flex; flex-direction: column; padding: 0 6px 5px; border-right: 1px solid #cfd8e1; }
.tools { flex: 1; display: flex; gap: 2px; align-items: flex-start; }
.big { min-width: 52px; padding: 6px 8px 0; display: flex; flex-direction: column; align-items: center; gap: 2px; font-size: 11px; }
.big .ic { width: 22px; height: 22px; stroke-width: 1.2; }
.stack { display: flex; flex-direction: column; padding: 0 8px; margin-top: -1px; }
.stack label, .stack button { height: 25px; display: flex; align-items: center; gap: 6px; }
.stack button { color: #8f9aa5; gap: 7px; }
.stack button .ic { opacity: .45; }
.stack input { width: 13px; height: 13px; margin: 0; accent-color: #0b6e93; }
.wide { padding: 0 14px 5px; }
.example { flex: 1; display: flex; flex-direction: column; gap: 6px; padding-top: 3px; font-size: 11px; }
.example select { width: 220px; height: 22px; font: 13px Inter, sans-serif; color: #17212c; background: #fff; border: 1px solid #6b7885; border-radius: 4px; padding: 0 4px; }
.cap { text-align: center; font-size: 11px; line-height: 14px; color: #5c6874; }

.work { flex: 1; min-height: 0; display: flex; }
.phead { height: 28px; flex: none; display: flex; justify-content: space-between; align-items: center; padding: 0 13px 1px 10px; background: #e4e9ed; border-bottom: 1px solid #cfd8e1; font-size: 11px; font-weight: 700; letter-spacing: 1px; color: #4a5663; }
.phead button { display: flex; }
.phead .ic { width: 10px; height: 10px; stroke: #4a5663; }
.explorer { width: 248px; flex: none; display: flex; flex-direction: column; border-right: 1px solid #cfd8e1; background: #f0f4f7; overflow: hidden; }
.tree { padding-top: 4px; }
.tree li { height: 24px; display: flex; align-items: center; gap: 5px; padding-right: 15px; }
.tree li.counted { padding-right: 9px; }
.d0 { padding-left: 6px; } .d1 { padding-left: 20px; } .d2 { padding-left: 34px; }
.tree li.d0 { padding-right: 18px; }
.tree .sel { background: #cde5f1; outline: 1px solid #0b6e93; outline-offset: -1px; }
.bold .name { font-weight: 600; }
.caret { width: 14px; min-width: 13px; text-align: center; font-size: 10px; color: #5c6874; }
.d0 .caret { width: 9px; min-width: 9px; }
.name { overflow: hidden; text-overflow: ellipsis; white-space: nowrap; }
.count { margin-left: auto; font-size: 11px; color: #5c6874; white-space: nowrap; }
.bang { width: 13px; height: 13px; border-radius: 7px; background: #b45309; color: #fff; font: 700 10px/13px Inter, sans-serif; text-align: center; flex: none; }

.center { flex: 1; min-width: 0; display: flex; flex-direction: column; }
.dtabs { height: 31px; flex: none; display: flex; background: #e4e9ed; border-bottom: 1px solid #cfd8e1; }
.dtab { display: flex; align-items: center; gap: 15px; padding: 0 14px 2px 12px; background: #f0f4f7; border-right: 1px solid #cfd8e1; border-top: 2px solid transparent; color: #4a5663; }
.dname { display: flex; align-items: center; gap: 5px; }
.dtab.on { background: #fff; border-top-color: #0b6e93; color: #17212c; font-weight: 600; }
.x { font-size: 14px; }
.dbar { height: 33px; flex: none; display: flex; align-items: center; gap: 17px; padding: 0 15px 0 16px; background: #fff; border-bottom: 1px solid #cfd8e1; color: #4a5663; }
.dbar b { margin-right: 9px; font-weight: 600; color: #17212c; }
.dbar button { display: flex; align-items: center; gap: 4px; }
.dbar .ic { stroke: #4a5663; }
.pct { margin-left: -3px; }
.first { margin-left: auto; }
.canvas { flex: 1; min-height: 0; display: flex; justify-content: center; overflow: hidden; background: linear-gradient(90deg, #cbd3dc 1px, transparent 1px) 0 0 / 24px 24px, linear-gradient(#cbd3dc 1px, transparent 1px) 0 0 / 24px 24px, #d9dde6; }
.paper { height: 100%; aspect-ratio: 2328 / 1644; background: #fff; box-shadow: 0 2px 12px rgba(30, 39, 51, .3); font-family: "Liberation Sans", Arial, sans-serif; }

.outer { fill: none; stroke: #bcc5ce; stroke-width: 2; }
.frame { fill: none; stroke: #3f4955; stroke-width: 4; }
.zone { font-size: 10px; fill: #5c6874; text-anchor: middle; }
.h2 { --c: #137a36; } .o2 { --c: #c53030; } .water { --c: #1d6bd1; } .lye { --c: #7a4bc4; } .n2 { --c: #56657a; } .nh3 { --c: #8a560f; } .cool { --c: #0e7a74; } .ac { --c: #c58a08; } .dc { --c: #b4531a; }
.pipe path { fill: none; stroke: var(--c); stroke-width: 4; }
.pipe.dc path { stroke-width: 6; }
.pipe .head, .coolant .head { fill: var(--c); stroke: none; }
.coolhead { fill: #0e7a74; }
.coolant path { fill: none; stroke: var(--c); stroke-width: 3; stroke-dasharray: 11 6; }
.dotline { fill: none; stroke: #137a36; stroke-width: 3; stroke-dasharray: 4 3; }
.sense { fill: none; stroke: #8a95a0; stroke-width: 2; stroke-dasharray: 5 4; }
.bus { stroke: #c58a08; stroke-width: 9; }
.eq { fill: #f1f4f7; stroke: #3f4955; stroke-width: 3; }
.eq .pv { fill: #d7e4f3; }
.eq .thick { stroke-width: 4; }
.eq .solid { fill: #3f4955; stroke: none; }
.eq .gap { stroke: #fff; stroke-width: 8; }
.eq .hollow { fill: none; }
.eq .mesh { fill: url(#mesh); stroke-width: 2; }
.eq .pipeStack { fill: #dde3ea; }
.faint { fill: none; stroke: #c3cbd3; stroke-width: 2; }
.level { stroke: var(--c); stroke-width: 3; stroke-dasharray: 8 4; opacity: .6; }
.shell { fill: #f8ecd6; stroke: #5a4a30; stroke-width: 5; filter: drop-shadow(0 0 4px #f59e0b) drop-shadow(0 0 6px #f59e0b) drop-shadow(0 0 8px #f59e0b); }
.endplate { fill: #e0e4ea; stroke: #3f4955; stroke-width: 3; }
.cellText { filter: drop-shadow(0 0 5px #f5b343) drop-shadow(0 0 6px #f5b343); }
.el { font-size: 23px; font-weight: 700; text-anchor: middle; fill: #1d2733; }
.prod { font-size: 16px; font-weight: 700; text-anchor: middle; fill: #137a36; }
.flow { fill: #fff; stroke: var(--c); stroke-width: 2; }
.node path { fill: #fff; stroke: var(--c); stroke-width: 2; }
.node text { font-size: 16px; font-weight: 700; fill: var(--c); text-anchor: middle; }
.bubble circle, .bubble path { fill: #fff; stroke: #5c6874; stroke-width: 2; }
.bubble text { font-size: 14px; font-weight: 700; text-anchor: middle; fill: #3f4955; }
.bubble .n { font-size: 12px; font-weight: 400; }
.tag { font-size: 20px; font-weight: 700; fill: #1d2733; }
.tag2 { font-size: 18px; font-weight: 700; fill: #1d2733; }
.sub { font-size: 16px; fill: #5c6874; }
.sm { font-size: 15px; fill: #5c6874; }
.xs { font-size: 14px; fill: #5c6874; }
.bs { font-size: 16px; font-weight: 700; fill: #1d2733; }
.bx { font-size: 14px; font-weight: 700; fill: #1d2733; }
.it { font-size: 13px; font-style: italic; fill: #5c6874; }
.lg, .note { font-size: 14px; fill: #4a5663; }
.m { text-anchor: middle; } .e { text-anchor: end; }
.key path { stroke: var(--c); stroke-width: 4; }
.key.cool path { stroke-dasharray: 11 5; }
.block { fill: none; stroke: #3f4955; stroke-width: 3; }
.tiny { font-size: 10px; fill: #5c6874; }
.fine { font-size: 12px; fill: #5c6874; }
.bv { font-size: 14px; font-weight: 700; fill: #1d2733; }
.bt { font-size: 17px; font-weight: 700; fill: #1d2733; }
.streams { width: 1112px; table-layout: fixed; border-collapse: collapse; border: 3px solid #4a5663; font: 14px/16px "Liberation Sans", Arial, sans-serif; color: #2c3744; background: #fff; }
.streams th, .streams td { height: 22px; padding: 0 5px; border: 1px solid #b8c1cb; text-align: right; white-space: nowrap; font-weight: 400; }
.streams th { background: #e4e8f1; font-weight: 700; border-bottom: 2px solid #4a5663; }
.streams tr:nth-child(even) td { background: #eff3f7; }
.streams th:nth-child(1) { width: 47px; } .streams th:nth-child(2) { width: 306px; } .streams th:nth-child(3) { width: 57px; }
.streams th:nth-child(4) { width: 69px; } .streams th:nth-child(5) { width: 70px; } .streams th:nth-child(6) { width: 118px; }
.streams th:nth-child(7) { width: 92px; } .streams th:nth-child(8) { width: 94px; } .streams th:nth-child(9) { width: 108px; }
.streams tr > :nth-child(-n+3), .streams tr > :last-child { text-align: left; }
.streams td:first-child { color: var(--c); font-weight: 700; }

.props { width: 318px; flex: none; display: flex; flex-direction: column; border-left: 1px solid #cfd8e1; overflow: hidden; }
.ptitle { padding: 8px 10px 6px; background: #fff; border-bottom: 1px solid #cfd8e1; height: 49px; flex: none; }
.ptitle h2 { font-size: 14px; line-height: 18px; font-weight: 700; }
.ptitle p { color: #5c6874; font-size: 11px; }
.pbtns { display: flex; flex-wrap: wrap; gap: 6px; padding: 8px 10px; border-bottom: 1px solid #cfd8e1; }
.pbtns button { height: 24px; padding: 0 9px; display: flex; align-items: center; gap: 6px; background: #fff; border: 1px solid #b9c5d1; border-radius: 4px; }
.pbtns .ic { stroke: #17212c; }
.req { padding: 8px 40px 9px 10px; line-height: 17px; color: #4a5663; border-bottom: 1px solid #cfd8e1; }
h3 { height: 25px; flex: none; padding-left: 8px; font-size: 12px; line-height: 24px; font-weight: 700; background: #e4e9ed; border-bottom: 1px solid #cfd8e1; }
.dsbox { flex: 1; min-height: 0; overflow: hidden; background: #fff; }
.ds { width: 100%; height: 390px; table-layout: fixed; border-collapse: collapse; font-size: 13px; line-height: 18px; }
.ds th { width: 50%; height: 24px; padding: 2px 12px 2px 6px; font-size: 12px; font-weight: 400; text-align: left; color: #4a5663; border-right: 1px solid #cfd8e1; border-bottom: 1px solid #cfd8e1; overflow: hidden; text-overflow: ellipsis; white-space: nowrap; }
.ds small { font-size: 12px; color: #6b7885; }
.ds td { padding: 2px 7px; border-bottom: 1px solid #cfd8e1; }
.ref { padding: 0 4px; border-radius: 3px; background: #dfeef5; color: #0b5775; font-size: 11px; }

.bottom { height: 160px; flex: none; display: flex; flex-direction: column; border-top: 1px solid #cfd8e1; background: #fff; }
.btabs { height: 27px; flex: none; display: flex; background: #e4e9ed; border-bottom: 1px solid #cfd8e1; }
.btabs button { display: flex; align-items: center; gap: 6px; padding: 0 12px 1px; border-right: 1px solid #cfd8e1; border-top: 2px solid transparent; color: #4a5663; }
.btabs .on { background: #fff; border-top-color: #0b6e93; color: #17212c; font-weight: 600; }
.btabs .dock { margin-left: auto; }
.dock .ic { stroke: #4a5663; }
.pill { padding: 0 6px; border-radius: 8px; background: #fdeccf; color: #b45309; font-size: 11px; font-weight: 500; }
.mbox { flex: 1; min-height: 0; overflow: hidden; }
.msgs { height: 141px; display: grid; grid-template-rows: repeat(6, 1fr); }
.msgs li { display: flex; align-items: center; border-bottom: 1px solid #cfd8e1; padding-left: 10px; }
.mi { width: 18px; text-align: center; font-weight: 700; margin-right: 6px; }
.mi svg { width: 10px; height: 10px; fill: none; stroke: #15803d; stroke-width: 2; }
.warn { color: #b45309; } .info { color: #0b6e93; }
time { font: 11px "Liberation Mono", monospace; width: 70px; color: #5c6874; }
.src { width: 96px; color: #4a5663; text-decoration: none; }
a.src { color: #0b5775; }
.mt { white-space: nowrap; }

.status { height: 24px; flex: none; display: flex; align-items: center; background: #0b5775; color: #e3eff5; white-space: nowrap; overflow: hidden; font-size: 11px; }
.status span { padding: 0 12px; line-height: 24px; border-right: 1px solid #2f7390; }
.status span:first-child { padding-left: 10px; }
.status .lic, .status .copy { border: 0; }
.status .copy { margin-left: auto; }
.dot { display: inline-block; width: 8px; height: 8px; border-radius: 4px; background: #4cd07d; margin-right: 5px; }
</style>
